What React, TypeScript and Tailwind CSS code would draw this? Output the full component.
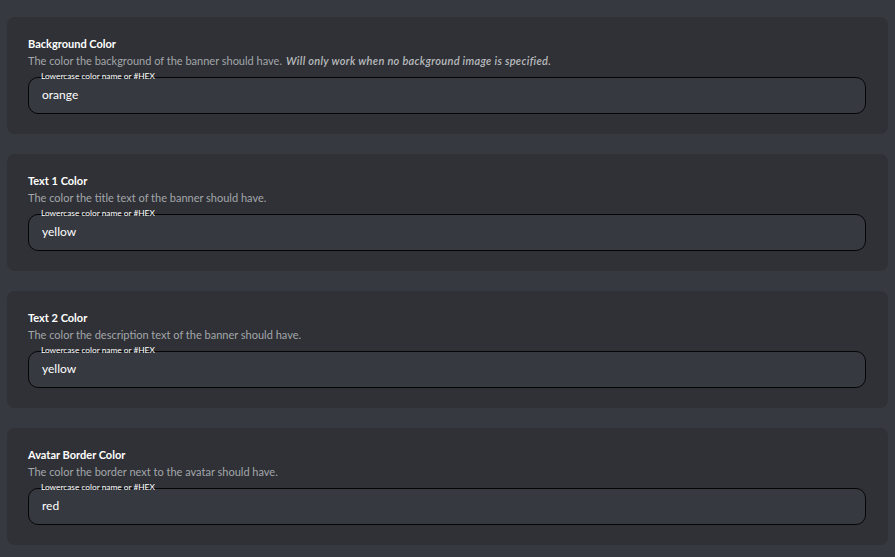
import React from 'react';

type Field = {
  title: string;
  desc: string;
  note?: string;
  value: string;
};

const FIELDS: Field[] = [
  {
    title: 'Background Color',
    desc: 'The color the background of the banner should have.',
    note: 'Will only work when no background image is specified.',
    value: 'orange',
  },
  { title: 'Text 1 Color', desc: 'The color the title text of the banner should have.', value: 'yellow' },
  { title: 'Text 2 Color', desc: 'The color the description text of the banner should have.', value: 'yellow' },
  { title: 'Avatar Border Color', desc: 'The color the border next to the avatar should have.', value: 'red' },
];

function ColorCard({ field }: { field: Field }) {
  return (
    <div className="rounded-lg bg-[#2f3136] pt-5 pb-5 pl-[21px] pr-[22px]">
      <h3 className="text-[11px] leading-[14px] font-bold text-white">{field.title}</h3>
      <p className="mt-[3px] text-[11px] leading-[14px] text-[#a3a6aa]">
        {field.desc}
        {field.note && (
          <em className="ml-1 font-semibold tracking-[0.3px] text-[#b9bbbe]">{field.note}</em>
        )}
      </p>
      <div className="relative mt-[9px]">
        <span className="absolute left-[13px] -top-[6px] text-[8.3px] leading-[10px] text-white">
          Lowercase color name or #HEX
        </span>
        <div className="h-[37px] rounded-[10px] border border-[#050506] bg-[#36393f] px-[13px] pb-px flex items-center text-[12px] text-white">
          {field.value}
        </div>
      </div>
    </div>
  );
}

export default function App() {
  return (
    <div
      className="min-h-screen bg-[#36393f] px-[7px] pt-[17px] pb-5 flex flex-col gap-5"
      style={{ fontFamily: 'Lato, "Noto Sans", sans-serif' }}
    >
      {FIELDS.map(f => (
        <ColorCard key={f.title} field={f} />
      ))}
    </div>
  );
}
